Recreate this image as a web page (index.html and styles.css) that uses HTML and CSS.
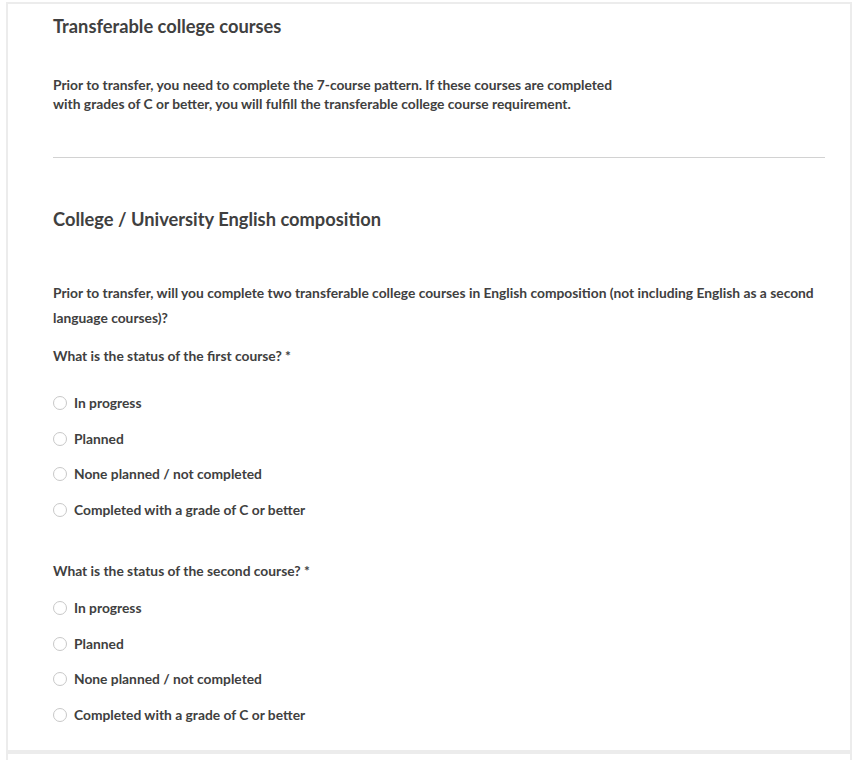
FILE: index.html
```html
<!DOCTYPE html>
<html>
<head>
<meta charset="utf-8">
<link rel="stylesheet" href="styles.css">
</head>
<body>
<div class="card">
  <section class="block">
    <h2 class="title">Transferable college courses</h2>
    <p class="intro">Prior to transfer, you need to complete the 7-course pattern. If these courses are completed<br>with grades of C or better, you will fulfill the transferable college course requirement.</p>
    <hr class="rule">
    <h2 class="title title-2">College / University English composition</h2>
    <p class="question">Prior to transfer, will you complete two transferable college courses in English composition (not including English as a second language courses)?</p>
    <p class="label label-1">What is the status of the first course? *</p>
    <div class="options options-1">
      <label class="opt"><span class="radio"></span>In progress</label>
      <label class="opt"><span class="radio"></span>Planned</label>
      <label class="opt"><span class="radio"></span>None planned / not completed</label>
      <label class="opt"><span class="radio"></span>Completed with a grade of C or better</label>
    </div>
    <p class="label label-2">What is the status of the second course? *</p>
    <div class="options options-2">
      <label class="opt"><span class="radio"></span>In progress</label>
      <label class="opt"><span class="radio"></span>Planned</label>
      <label class="opt"><span class="radio"></span>None planned / not completed</label>
      <label class="opt"><span class="radio"></span>Completed with a grade of C or better</label>
    </div>
  </section>
  <div class="sep"></div>
  <section class="block next"></section>
</div>
</body>
</html>
```
FILE: styles.css
```css
html, body { margin: 0; padding: 0; background: #fff; }
body {
  font-family: Lato, "Open Sans", sans-serif;
  color: #404040;
  padding: 2px 6px 0 6px;
  height: 760px;
  overflow: hidden;
  box-sizing: border-box;
}
.card {
  border: 2px solid #ececec;
  border-bottom: none;
}
.block {
  padding: 10px 25px 25px 45px;
}
.title {
  margin: 0;
  font-size: 18.3px;
  font-weight: 700;
  line-height: 24px;
  color: #404040;
}
.intro {
  margin: 37px 0 0 0;
  font-size: 13.8px;
  font-weight: 700;
  line-height: 19px;
}
.rule {
  border: 0;
  border-top: 1px solid #d2d2d2;
  margin: 44px 0 0 0;
}
.title-2 {
  margin-top: 49px;
}
.question {
  margin: 49px 0 0 0;
  font-size: 13.8px;
  font-weight: 700;
  line-height: 25px;
}
.label {
  margin: 0;
  font-size: 13.8px;
  font-weight: 700;
  line-height: 20px;
}
.label-1 { margin-top: 16px; }
.label-2 { margin-top: 41px; }
.options {
  display: flex;
  flex-direction: column;
  gap: 15.7px;
}
.options-1 { margin-top: 27px; }
.options-2 { margin-top: 17px; }
.opt {
  display: flex;
  align-items: center;
  gap: 7px;
  font-size: 13.8px;
  font-weight: 700;
  line-height: 20px;
}
.radio {
  width: 12px;
  height: 12px;
  border: 1px solid #c8c8c8;
  border-radius: 50%;
  box-sizing: content-box;
}
.sep {
  height: 4px;
  background: #ececec;
}
.next { height: 40px; padding: 0; }
```
